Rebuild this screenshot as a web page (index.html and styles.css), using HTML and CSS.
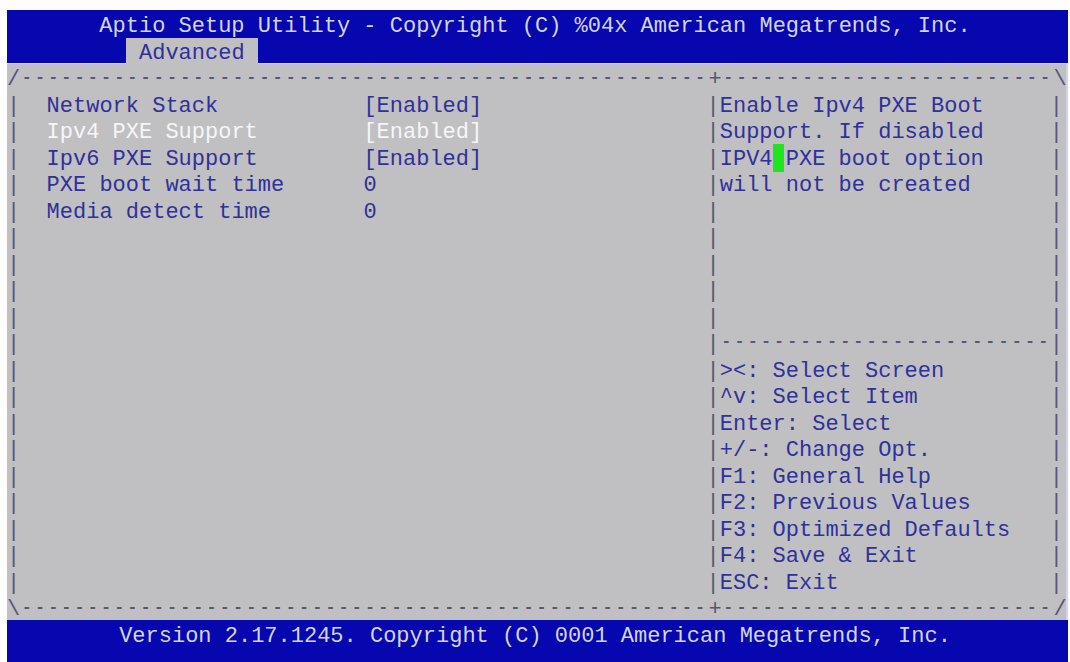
FILE: index.html
```html
<!DOCTYPE html>
<html lang="en">
<head>
    <meta charset="UTF-8">
    <meta name="viewport" content="width=device-width, initial-scale=1.0">
    <title>Aptio Setup Utility</title>
    <link rel="stylesheet" href="styles.css">
</head>
<body>
    <div class="screen">
        <div class="bar">
            <div class="line title">Aptio Setup Utility - Copyright (C) %04x American Megatrends, Inc.</div>
            <div class="line tabs"><span class="tab">Advanced</span></div>
        </div>

        <div class="panel">
            <div class="line frame">/<span class="dash">----------------------------------------------------</span>+<span class="dash">-------------------------</span>\</div>

            <div class="row">
                <span class="edge">|</span>
                <div class="left"><span class="label">Network Stack</span><span class="value">[Enabled]</span></div>
                <span class="edge">|</span>
                <div class="help">Enable Ipv4 PXE Boot</div>
                <span class="edge">|</span>
            </div>
            <div class="row">
                <span class="edge">|</span>
                <div class="left selected"><span class="label">Ipv4 PXE Support</span><span class="value">[Enabled]</span></div>
                <span class="edge">|</span>
                <div class="help">Support. If disabled</div>
                <span class="edge">|</span>
            </div>
            <div class="row">
                <span class="edge">|</span>
                <div class="left"><span class="label">Ipv6 PXE Support</span><span class="value">[Enabled]</span></div>
                <span class="edge">|</span>
                <div class="help">IPV4<span class="cursor"> </span>PXE boot option</div>
                <span class="edge">|</span>
            </div>
            <div class="row">
                <span class="edge">|</span>
                <div class="left"><span class="label">PXE boot wait time</span><span class="value">0</span></div>
                <span class="edge">|</span>
                <div class="help">will not be created</div>
                <span class="edge">|</span>
            </div>
            <div class="row">
                <span class="edge">|</span>
                <div class="left"><span class="label">Media detect time</span><span class="value">0</span></div>
                <span class="edge">|</span>
                <div class="help"></div>
                <span class="edge">|</span>
            </div>
            <div class="row"><span class="edge">|</span><div class="left"></div><span class="edge">|</span><div class="help"></div><span class="edge">|</span></div>
            <div class="row"><span class="edge">|</span><div class="left"></div><span class="edge">|</span><div class="help"></div><span class="edge">|</span></div>
            <div class="row"><span class="edge">|</span><div class="left"></div><span class="edge">|</span><div class="help"></div><span class="edge">|</span></div>
            <div class="row"><span class="edge">|</span><div class="left"></div><span class="edge">|</span><div class="help"></div><span class="edge">|</span></div>
            <div class="row"><span class="edge">|</span><div class="left"></div><span class="edge">|</span><div class="help frame"><span class="dash">-------------------------</span></div><span class="edge">|</span></div>
            <div class="row"><span class="edge">|</span><div class="left"></div><span class="edge">|</span><div class="help">&gt;&lt;: Select Screen</div><span class="edge">|</span></div>
            <div class="row"><span class="edge">|</span><div class="left"></div><span class="edge">|</span><div class="help">^v: Select Item</div><span class="edge">|</span></div>
            <div class="row"><span class="edge">|</span><div class="left"></div><span class="edge">|</span><div class="help">Enter: Select</div><span class="edge">|</span></div>
            <div class="row"><span class="edge">|</span><div class="left"></div><span class="edge">|</span><div class="help">+/-: Change Opt.</div><span class="edge">|</span></div>
            <div class="row"><span class="edge">|</span><div class="left"></div><span class="edge">|</span><div class="help">F1: General Help</div><span class="edge">|</span></div>
            <div class="row"><span class="edge">|</span><div class="left"></div><span class="edge">|</span><div class="help">F2: Previous Values</div><span class="edge">|</span></div>
            <div class="row"><span class="edge">|</span><div class="left"></div><span class="edge">|</span><div class="help">F3: Optimized Defaults</div><span class="edge">|</span></div>
            <div class="row"><span class="edge">|</span><div class="left"></div><span class="edge">|</span><div class="help">F4: Save &amp; Exit</div><span class="edge">|</span></div>
            <div class="row"><span class="edge">|</span><div class="left"></div><span class="edge">|</span><div class="help">ESC: Exit</div><span class="edge">|</span></div>

            <div class="line frame">\<span class="dash">----------------------------------------------------</span>+<span class="dash">-------------------------</span>/</div>
        </div>

        <div class="bar">
            <div class="line title">Version 2.17.1245. Copyright (C) 0001 American Megatrends, Inc.</div>
            <div class="line"></div>
        </div>
    </div>
</body>
</html>
```

FILE: styles.css
```css
body {
    margin: 0;
    padding: 10px 2px 0 7px;
    background-color: #fdfdfd;
    font-family: "Liberation Mono", "Courier New", monospace;
    font-size: 22px;
    overflow: hidden;
}
.screen {
    width: 1061px;
}
/* one text cell is 13.2px wide, 26.5px tall */
.line, .row {
    height: 26.5px;
    box-sizing: border-box;
    padding-top: 7px;
    line-height: 19.5px;
    white-space: pre;
}
.bar {
    background-color: #0707b0;
    color: #d4d4e2;
}
.title {
    text-align: center;
    padding-right: 5px;
}
.tabs {
    padding-top: 0;
    padding-left: 118.8px; /* 9 columns */
}
.tab {
    display: inline-block;
    height: 27px;
    margin-top: 1.5px;
    padding: 5px 13.2px 0;
    box-sizing: border-box;
    line-height: 22px;
    background-color: #c0c0c3;
    color: #30309a;
    vertical-align: top;
}
.panel {
    background-color: #c0c0c3;
    color: #30309a;
    box-shadow: inset -2px 0 0 #d4d4ee, inset 0 1px 0 #d4d4ee;
}
.frame, .edge {
    color: #56567a;
}
/* short, spaced dashes like the text-mode font */
.dash {
    display: inline-block;
    font-size: 16px;
    font-weight: bold;
    letter-spacing: 3.6px;
    text-indent: 1.8px;
    vertical-align: top;
}
.line .dash {
    margin-top: -1px;
}
.row .dash {
    margin-top: -2px;
}
.row {
    display: flex;
}
.edge {
    width: 13.2px;
    flex: none;
}
.left {
    width: 686.4px; /* 52 columns */
    padding-left: 26.4px;
    box-sizing: border-box;
    display: flex;
}
.label {
    width: 316.8px; /* 24 columns */
}
.selected {
    color: #f6f6f8;
}
.help {
    width: 330px; /* 25 columns */
}
.cursor {
    display: inline-block;
    width: 11px;
    height: 28px;
    margin: -6px 2.2px 0 0;
    vertical-align: top;
    background-color: #1ee61e;
}
```
